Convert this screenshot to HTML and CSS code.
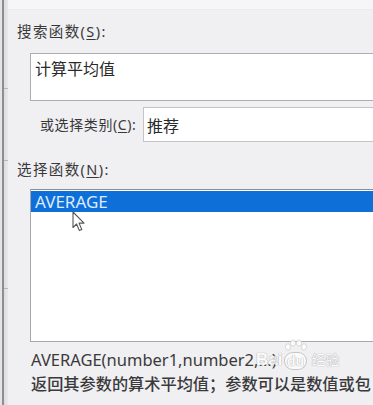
FILE: index.html
```html
<!DOCTYPE html>
<html lang="zh-CN">
<head>
<meta charset="utf-8">
<link rel="stylesheet" href="styles.css">
</head>
<body>
<div class="screen">
  <div class="edge">
    <span class="edge-mark m1"></span>
    <span class="edge-mark m2"></span>
    <span class="edge-mark m3"></span>
  </div>
  <div class="dialog">
    <div class="topband"></div>
    <div class="content">
      <div class="label">搜索函数(<u>S</u>):</div>
      <div class="search-box">计算平均值</div>
      <div class="cat-row">
        <div class="label cat-label">或选择类别(<u>C</u>):</div>
        <div class="cat-box">推荐</div>
      </div>
      <div class="label list-label">选择函数(<u>N</u>):</div>
      <div class="list-box">
        <div class="list-item selected">AVERAGE</div>
        <svg class="cursor" width="14" height="21" viewBox="0 0 14 21">
          <path d="M1 1 L1 16.5 L4.6 13 L7.4 19.6 L9.8 18.6 L7.1 12.1 L12 12.1 Z" fill="#fff" stroke="#555" stroke-width="1.1" stroke-linejoin="round"/>
        </svg>
      </div>
      <div class="formula">AVERAGE(number1,number2,...)</div>
      <div class="desc">返回其参数的算术平均值；参数可以是数值或包</div>
      <div class="watermark">
        <span class="wm-bai">Bai</span>
        <span class="wm-paw">
          <svg width="24" height="18" viewBox="0 0 24 18">
            <ellipse cx="5" cy="8" rx="2.6" ry="3.2" fill="#fff" stroke="#bbb" stroke-width="0.6"/>
            <ellipse cx="10" cy="4" rx="2.6" ry="3.2" fill="#fff" stroke="#bbb" stroke-width="0.6"/>
            <ellipse cx="16" cy="4" rx="2.6" ry="3.2" fill="#fff" stroke="#bbb" stroke-width="0.6"/>
            <ellipse cx="21" cy="8" rx="2.6" ry="3.2" fill="#fff" stroke="#bbb" stroke-width="0.6"/>
          </svg>
          <span class="wm-du">du</span>
        </span>
        <span class="wm-jy">经验</span>
      </div>
    </div>
  </div>
</div>
</body>
</html>
```

FILE: styles.css
```css
* { box-sizing: border-box; }

html, body {
  margin: 0;
  padding: 0;
}

body {
  width: 373px;
  height: 405px;
  overflow: hidden;
  background: #efeef1;
  font-family: "Noto Sans", "Noto Sans CJK SC", sans-serif;
}

.screen {
  display: flex;
  width: 373px;
  height: 405px;
  overflow: hidden;
}

.edge {
  position: relative;
  flex: 0 0 8px;
  height: 405px;
  background: linear-gradient(to right, #e4e4e6 0, #e4e4e6 2px, #8e8e90 2px, #8e8e90 4px, #dcdcde 4px, #e9e9eb 8px);
}

.edge-mark {
  position: absolute;
  left: 4px;
  width: 4px;
  height: 1px;
  background: #b8b8ba;
}
.m1 { top: 88px; }
.m2 { top: 160px; }
.m3 { top: 288px; }

.dialog {
  flex: 1 1 auto;
  min-width: 0;
  position: relative;
  background: #f0eff2;
  overflow: hidden;
}

.topband {
  height: 10px;
  background: #f6f5f8;
  border-bottom: 1px solid #ebeaee;
}

.content {
  position: relative;
  padding: 11px 0 0 9px;
  display: flex;
  flex-direction: column;
  align-items: flex-start;
}

.label {
  font-size: 14.5px;
  line-height: 20px;
  color: #38383a;
  letter-spacing: 1.4px;
  white-space: nowrap;
}

.label u {
  text-underline-offset: 2px;
}

.search-box {
  margin: 12px -60px 0 13px;
  align-self: stretch;
  height: 48px;
  background: #fff;
  border: 1px solid #adadb0;
  padding: 5px 0 0 4px;
  font-size: 16px;
  line-height: 20px;
  color: #2a2a2a;
}

.cat-row {
  margin-top: 6px;
  align-self: stretch;
  margin-right: -60px;
  display: flex;
  align-items: center;
}

.cat-label {
  margin-left: 23px;
  width: 103px;
  font-size: 14px;
  letter-spacing: 0.6px;
}

.cat-box {
  flex: 1 1 auto;
  height: 35px;
  background: #fff;
  border: 1px solid #c4c4c8;
  padding: 0 0 0 3px;
  display: flex;
  align-items: center;
  font-size: 16px;
  color: #2a2a2a;
}

.list-label {
  margin-top: 17px;
}

.list-box {
  position: relative;
  margin: 10px -60px 0 13px;
  align-self: stretch;
  height: 153px;
  background: #fff;
  border: 1px solid #a8a8ac;
  border-top-color: #8e8e92;
  padding: 1px 0 0 0;
}

.list-item {
  height: 21px;
  font-size: 17px;
  line-height: 21px;
  padding-left: 4px;
  white-space: nowrap;
}

.list-item.selected {
  background: #0f6fd8;
  color: #dcebff;
}

.cursor {
  position: absolute;
  left: 41px;
  top: 21px;
}

.formula {
  margin: 7px 0 0 14px;
  font-size: 16.5px;
  line-height: 22px;
  color: #3a3a3c;
  white-space: nowrap;
}

.desc {
  margin: 2px 0 0 14px;
  font-size: 16.2px;
  line-height: 22px;
  color: #3a3a3c;
  white-space: nowrap;
  font-weight: 500;
}

.watermark {
  position: absolute;
  left: 248px;
  top: 329px;
  display: flex;
  align-items: flex-end;
  gap: 1px;
  opacity: 0.8;
  color: #fff;
  text-shadow: 0 0 1px #9a9a9a, 0 0 1px #9a9a9a;
  font-family: "Liberation Sans", "Noto Sans CJK SC", sans-serif;
}

.wm-bai {
  font-size: 17px;
  font-weight: bold;
  line-height: 18px;
}

.wm-paw {
  display: flex;
  flex-direction: column;
  align-items: center;
  width: 24px;
}

.wm-paw svg {
  display: block;
  margin-bottom: -4px;
}

.wm-du {
  font-size: 14px;
  font-weight: bold;
  line-height: 16px;
  background: #fff;
  color: #fff;
  border-radius: 8px;
  padding: 0 2px;
  box-shadow: 0 0 0 1px #bbb;
}

.wm-jy {
  font-size: 14px;
  line-height: 18px;
  margin-left: 3px;
}
```
